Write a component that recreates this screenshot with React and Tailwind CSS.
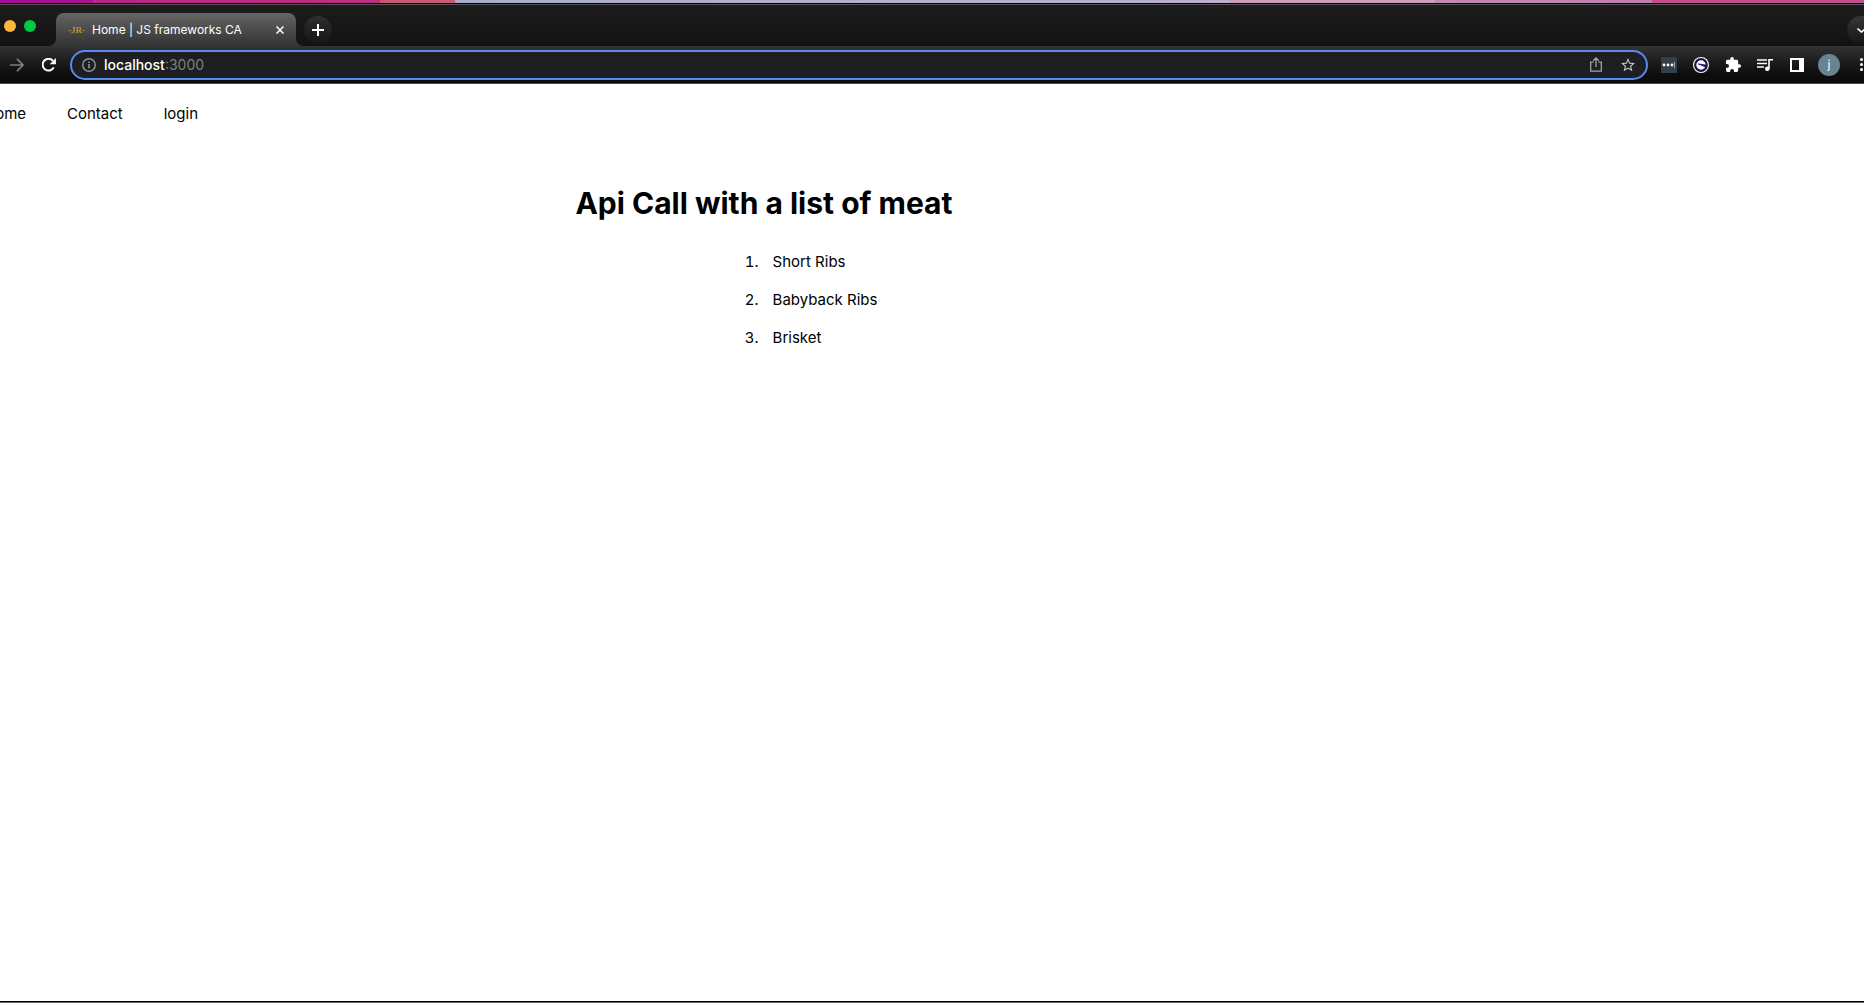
import React from "react";

function IconButton({ label, className = "", children }) {
  return (
    <button type="button" aria-label={label} className={`flex shrink-0 items-center justify-center ${className}`}>
      {children}
    </button>
  );
}

function TabStrip() {
  return (
    <div className="flex h-[41px] items-start bg-gradient-to-b from-[#1c1c1c] to-[#121212]">
      <div className="flex w-12 shrink-0 items-center gap-2 pt-[15px] pl-1">
        <button type="button" aria-label="Minimize" className="size-3 rounded-full bg-[#ffb63e]" />
        <button type="button" aria-label="Zoom" className="size-3 rounded-full bg-[#00c944]" />
      </div>
      <svg className="mt-[33px] size-2 shrink-0" viewBox="0 0 8 8"><path d="M8 0v8H0a8 8 0 0 0 8-8z" fill="#333" /></svg>
      <div className="mt-2 flex h-[33px] w-[240px] shrink-0 items-center rounded-t-lg bg-gradient-to-b from-[#666] to-[#333] pr-2 pl-3 text-white">
        <span className="w-6 font-['Liberation_Serif',serif] text-[9px] leading-4 font-bold text-[#b5962f]">-JR-</span>
        <span className="grow text-xs whitespace-nowrap">Home | JS frameworks CA</span>
        <IconButton label="Close tab" className="size-4">
          <svg className="size-2" viewBox="0 0 8 8"><path d="M.5.5l7 7m0-7l-7 7" stroke="#fff" strokeWidth="1.5" /></svg>
        </IconButton>
      </div>
      <svg className="mt-[33px] size-2 shrink-0" viewBox="0 0 8 8"><path d="M0 0v8h8a8 8 0 0 1-8-8z" fill="#333" /></svg>
      <IconButton label="New tab" className="mt-[11px] size-7 rounded-full bg-gradient-to-b from-[#2e2e2e] to-[#161616]">
        <svg className="size-3" viewBox="0 0 12 12"><path d="M6 0v12M0 6h12" stroke="#fff" strokeWidth="2" /></svg>
      </IconButton>
      <IconButton label="Search tabs" className="mt-[11px] -mr-[11px] ml-auto size-7 rounded-full bg-gradient-to-b from-[#363636] to-[#161616]">
        <svg className="h-[5px] w-[9px]" viewBox="0 0 9 5" fill="none"><path d="M.5.5l4 3.5 4-3.5" stroke="#fff" strokeWidth="1.6" /></svg>
      </IconButton>
    </div>
  );
}

function Toolbar() {
  return (
    <div className="flex h-[38px] items-center border-b border-[#484848] bg-gradient-to-b from-[#333] via-[#191919] to-[#0c0c0c] to-80%">
      <IconButton label="Forward" className="w-[34px]">
        <svg className="size-[14px]" viewBox="0 0 14 14" fill="none" stroke="#7e7e7e" strokeWidth="1.7"><path d="M0 7h13M7 .8L13 7l-6 6.2" /></svg>
      </IconButton>
      <IconButton label="Reload" className="w-9 pr-[6px]">
        <svg className="size-[14px]" viewBox="0 0 14 14"><path d="M11.8 9.4A5.9 5.9 0 1 1 11 2.8" fill="none" stroke="#fff" strokeWidth="2" /><path d="M13.9 0v6.2H7.7z" fill="#fff" /></svg>
      </IconButton>
      <div className="flex h-[30px] min-w-0 grow items-center rounded-full border-2 border-[#588af0] bg-[#1d1f22] pr-0.5 pl-2.5">
        <svg className="mr-2 size-[14px] shrink-0" viewBox="0 0 15 15"><circle cx="7.5" cy="7.5" r="6.7" fill="none" stroke="#92969b" strokeWidth="1.5" /><path d="M7.5 6.5V11M7.5 3.8v1.6" stroke="#92969b" strokeWidth="1.7" /></svg>
        <div role="textbox" aria-label="Address" className="grow text-sm text-[#7d7f82]"><span className="font-medium text-white">localhost</span>:3000</div>
        <IconButton label="Share" className="w-8">
          <svg className="h-[15px] w-3" viewBox="0 0 12 15" fill="none" stroke="#a2a4a7" strokeWidth="1.3"><path d="M3.5 5.2H.7v9h10.6v-9H8.5M6 10V1.2M3.2 3.8L6 1l2.8 2.8" /></svg>
        </IconButton>
        <IconButton label="Bookmark" className="w-8">
          <svg className="size-[14px]" viewBox="2 2 20 20" fill="#c4c6c9"><path d="M22 9.24l-7.19-.62L12 2 9.19 8.63 2 9.24l5.46 4.73L5.82 21 12 17.27 18.18 21l-1.63-7.03L22 9.24zM12 15.4l-3.76 2.27 1-4.28-3.32-2.88 4.38-.38L12 6.1l1.71 4.04 4.38.38-3.32 2.88 1 4.28L12 15.4z" /></svg>
        </IconButton>
      </div>
      <div className="-mr-[13px] ml-[5px] flex shrink-0 items-center">
        <IconButton label="Password extension" className="w-8">
          <svg className="size-4" viewBox="0 0 16 16"><rect width="16" height="16" rx="1" fill="#324049" /><g fill="#fff"><circle cx="3" cy="8" r="1.4" /><circle cx="7" cy="8" r="1.4" /><circle cx="11" cy="8" r="1.4" /></g><path d="M13.5 5v6" stroke="#9aa5ab" /></svg>
        </IconButton>
        <IconButton label="Clock extension" className="w-8">
          <svg className="size-4" viewBox="0 0 16 16"><circle cx="8" cy="8" r="8" fill="#fff" /><circle cx="8" cy="8" r="5.8" fill="#fff" stroke="#1b1150" strokeWidth="2.2" /><path d="M5.2 6.900L12.800 8v2z" fill="#1b1150" stroke="#1b1150" strokeWidth=".8" /></svg>
        </IconButton>
        <IconButton label="Extensions" className="w-8">
          <svg className="size-[15px]" viewBox="2 1 21 21" fill="#fff"><path d="M20.5 11H19V7c0-1.1-.9-2-2-2h-4V3.500a2.500 2.500 0 0 0-5 0V5H4c-1.100 0-2 .9-2 2v3.800h1.500a2.700 2.700 0 0 1 0 5.400H2V20c0 1.100.9 2 2 2h3.800v-1.500a2.700 2.700 0 0 1 5.400 0V22H17c1.100 0 2-.9 2-2v-4h1.500a2.500 2.500 0 0 0 0-5z" /></svg>
        </IconButton>
        <IconButton label="Media" className="w-8">
          <svg className="h-3 w-4" viewBox="0 0 16 12"><path d="M0 1h10M0 4.500h10M0 8h7" stroke="#fff" strokeWidth="1.600" /><circle cx="10.300" cy="9.700" r="2.300" fill="#fff" /><path d="M12 9.700V.8h4" fill="none" stroke="#fff" strokeWidth="1.600" /></svg>
        </IconButton>
        <IconButton label="Side panel" className="w-8">
          <svg className="size-[14px]" viewBox="0 0 14 14"><path d="M1 1h12v12H1z" fill="none" stroke="#fff" strokeWidth="2" /><path d="M9 0h5v14H9z" fill="#fff" /></svg>
        </IconButton>
        <IconButton label="Profile" className="mx-[5px] size-[22px] rounded-full bg-[#69838f] text-xs text-white">j</IconButton>
        <IconButton label="Menu" className="w-8 pl-px">
          <svg className="h-[13px] w-[3px]" viewBox="0 0 3 13" fill="#fff"><circle cx="1.500" cy="1.500" r="1.500" /><circle cx="1.500" cy="6.500" r="1.500" /><circle cx="1.500" cy="11.500" r="1.500" /></svg>
        </IconButton>
      </div>
    </div>
  );
}

const links = ["Home", "Contact", "login"];
const meats = ["Short Ribs", "Babyback Ribs", "Brisket"];

export default function App() {
  return (
    <div className="flex min-h-screen flex-col overflow-hidden bg-white font-[Inter,sans-serif] text-black">
      <div className="h-1 border-b border-black bg-[linear-gradient(90deg,#a80b98_0,#ad128f_5%,#b92487_5%,#bc3080_20.4%,#c75573_20.4%,#ca5a75_24.4%,#a8aecd_24.4%,#bdb0cc_66%,#cb9fb8_66%,#cba0b8_77%,#c489b0_77%,#bf7fae_88.6%,#c3508b_88.6%,#c3508b_100%)]" />
      <header className="border-t border-[#555]">
        <TabStrip />
        <Toolbar />
      </header>
      <nav className="-ml-4 flex gap-[41px] pt-[18px] text-[15px] leading-6">
        {links.map((l) => <a key={l} href="#">{l}</a>)}
      </nav>
      <main className="flex grow flex-col items-center pt-14 pr-[336px]">
        <h1 className="text-[30px] leading-[42px] font-bold">Api Call with a list of meat</h1>
        <ol className="mt-[26px] flex list-decimal flex-col gap-[14px] pl-28 text-[15px] leading-6">
          {meats.map((m) => <li key={m} className="pl-[10px]">{m}</li>)}
        </ol>
      </main>
      <footer className="h-[2px] border-t border-black bg-[#666]" />
    </div>
  );
}
